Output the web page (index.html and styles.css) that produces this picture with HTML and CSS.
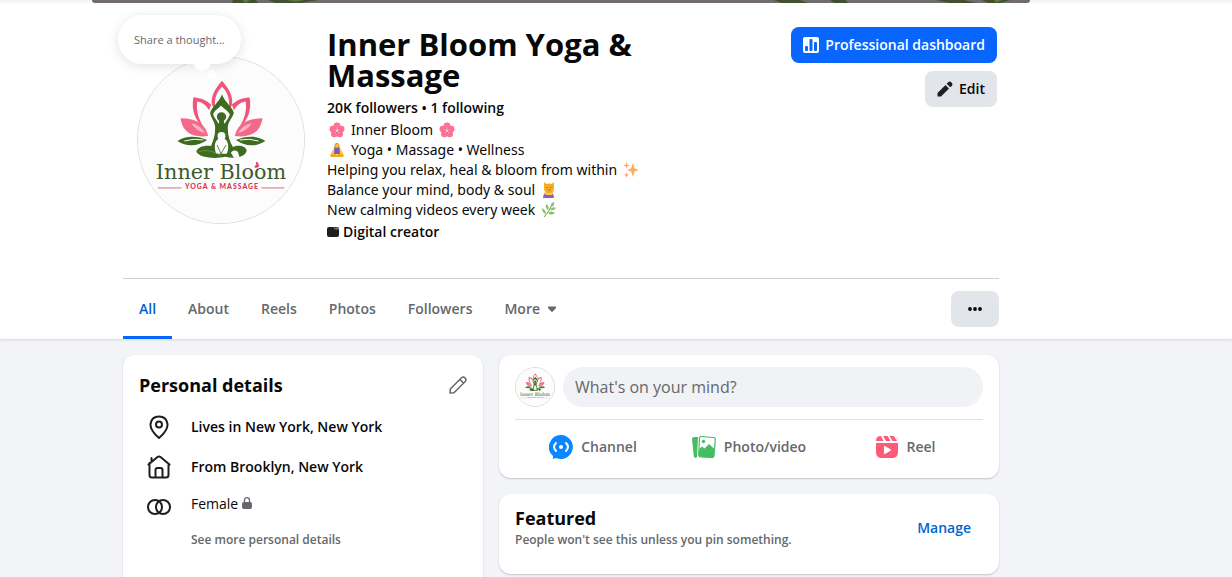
FILE: index.html
```html
<!DOCTYPE html>
<html lang="en">

<head>
    <meta charset="UTF-8" />
    <meta name="viewport" content="width=device-width, initial-scale=1.0" />
    <title>Inner Bloom Yoga &amp; Massage</title>
    <link rel="stylesheet" href="styles.css">
</head>

<body>
    <header class="profile-header">
        <div class="cover">
            <svg class="cover-art" viewBox="0 0 938 3" preserveAspectRatio="none" aria-hidden="true">
                <rect width="938" height="3" fill="#716b6c" />
                <path d="M141 0H164L166 3H140ZM176 0H226L208 3H184ZM682 0H708L716 3H690ZM738 0H754L756 3H742ZM844 0H872L884 3H858ZM890 0H918L908 3H896Z" fill="#42502f" />
                <path d="M150 0H158L154 3ZM194 0H212L204 2ZM692 0L704 3M902 0H910L904 3Z" fill="#5d7543" />
            </svg>
        </div>

        <div class="column">
            <div class="intro">
                <div class="avatar-wrap">
                    <svg class="avatar" viewBox="0 0 168 168" role="img" aria-label="Inner Bloom Yoga &amp; Massage">
                        <g id="logo">
                            <rect width="168" height="168" fill="#fcfcfc" />
                            <path d="M85 24C78 32 73 40 75 49L79 54C76 44 79 36 85 30C91 36 94 44 91 54L95 49C97 40 92 32 85 24Z" fill="#f0567c" />
                            <g id="side">
                                <path d="M56 41C54 53 57 64 67 72C60 61 59 53 60 45C66 46 69 49 72 54L74 48C68 43 62 41 56 41Z" fill="#f0567c" />
                                <path d="M43 62C45 75 53 82 71 80C69 69 60 62 43 62Z" fill="#f4698a" />
                                <path d="M54 67Q63 69 68 77Q59 75 54 67Z" fill="#fbb3c2" />
                                <path d="M40 85C49 79 60 80 70 84C60 91 49 91 40 85Z" fill="#3d6b1f" />
                                <path d="M47 85Q57 82 66 84" fill="none" stroke="#fcfcfc" stroke-width="1" />
                            </g>
                            <use href="#side" transform="matrix(-1 0 0 1 169 0)" />
                            <path d="M85 38C82 46 74 51 73 57C74 63 79 66 78 74C78 80 76 85 74 90C67 89 60 91 59 96C63 103 80 103 88 101C98 103 108 102 110 95C109 89 101 89 96 91C93 86 91 80 91 74C90 66 95 63 97 57C96 51 88 46 85 38ZM84 49C86 52 91 54 93 58C92 62 89 65 88 67L81 67C80 64 77 62 76 58C77 54 82 52 84 49Z" fill="#3d6b1f" fill-rule="evenodd" />
                            <circle cx="84.500" cy="60.500" r="4.700" fill="#3d6b1f" />
                            <path d="M82 63H87V69H82Z" fill="#3d6b1f" />
                            <circle cx="84.500" cy="80" r="4" fill="#fcfcfc" />
                            <path d="M81 83C77 86 77 92 79 98H90C92 92 92 86 88 83Z" fill="#fcfcfc" />
                            <path d="M80 89L84 98L89 89" fill="none" stroke="#3d6b1f" stroke-width=".8" />
                            <path d="M94 97Q97 93 101 96L103 102H97Z" fill="#fcfcfc" />
                            <path d="M61 96Q72 92 84 100" fill="none" stroke="#78964f" stroke-width=".8" />
                            <text class="logo-name" x="84" y="123">Inner Bloom</text>
                            <path d="M118 112Q118 108 123 109Q122 113 118 112ZM121 110Q118 108 120 106Q123 107 121 110Z" fill="#ea4770" />
                            <text class="logo-tag" x="85" y="134">YOGA &amp; MASSAGE</text>
                            <path d="M20 132.500H44M125 132.500H148" stroke="#d9707f" stroke-width="1" />
                        </g>
                    </svg>
                    <button class="thought" type="button">Share a thought...</button>
                </div>

                <div class="bio">
                    <h1>Inner Bloom Yoga &amp; Massage</h1>
                    <p class="counts"><a href="#followers">20K followers</a> • <a href="#following">1 following</a></p>
                    <p class="line">
                        <svg class="emoji first" viewBox="0 0 16 16">
                            <g id="blossom">
                                <g fill="#ff7096">
                                    <circle cx="8" cy="4" r="3.400" />
                                    <circle cx="3.800" cy="7" r="3.300" />
                                    <circle cx="12.200" cy="7" r="3.300" />
                                    <circle cx="5.300" cy="12" r="3.300" />
                                    <circle cx="10.700" cy="12" r="3.300" />
                                </g>
                                <circle cx="8" cy="8.500" r="2.400" fill="#e8507b" />
                                <path d="M8 5.500V8.500M5.300 7.600L8 8.500L10.700 7.600M6.300 11L8 8.500L9.700 11" stroke="#ffd9de" stroke-width=".9" fill="none" />
                            </g>
                        </svg>Inner Bloom
                        <svg class="emoji" viewBox="0 0 16 16"><use href="#blossom" /></svg>
                    </p>
                    <p class="line">
                        <svg class="emoji first" viewBox="0 0 16 16">
                            <path d="M8 1C5.500 1 5.500 4 5 7H11C10.500 4 10.500 1 8 1Z" fill="#c88a2c" />
                            <circle cx="8" cy="3.800" r="1.800" fill="#ffc83d" />
                            <path d="M5 6L2 11V13H4L6 9ZM11 6L14 11V13H12L10 9Z" fill="#ffc83d" />
                            <path d="M5.500 6H10.500L11 12H5Z" fill="#7d5bb5" />
                            <path d="M1 13Q4 11 8 12.500Q12 11 15 13Q15 15 12 15H4Q1 15 1 13Z" fill="#f5a91f" />
                        </svg>Yoga • Massage • Wellness
                    </p>
                    <p class="line">Helping you relax, heal &amp; bloom from within
                        <svg class="emoji" viewBox="0 0 16 16">
                            <path d="M10 1L11.500 6.500L16 8L11.500 9.500L10 15L8 9.500L4 8L8 6.500Z" fill="#ffab5c" />
                            <path d="M3.500 0L4.300 2.700L7 3.500L4.300 4.300L3.500 7L2.700 4.300L0 3.500L2.700 2.700ZM3.500 10L4.200 12.300L6 13L4.200 13.700L3.500 16L2.800 13.700L1 13L2.800 12.300Z" fill="#f8a468" />
                        </svg>
                    </p>
                    <p class="line">Balance your mind, body &amp; soul
                        <svg class="emoji" viewBox="0 0 16 16">
                            <path d="M2 16Q2 10 8 10Q13 10 13 16Z" fill="#8662c7" />
                            <path d="M3 0L5.500 2L8 1.500L10.500 2L13 0L13 6Q13 10 10 11H6Q3 10 3 6Z" fill="#f6ad26" />
                            <path d="M3 10L6 11H10L13 9L11 13H5Z" fill="#ffc83d" />
                            <path d="M5.500 5.500H7M9 5.500H10.500M6.500 8H9.500" stroke="#b46a18" stroke-width=".8" />
                        </svg>
                    </p>
                    <p class="line">New calming videos every week
                        <svg class="emoji" viewBox="0 0 16 16">
                            <path d="M3 15Q7 11 11 3" stroke="#6f9c3d" stroke-width="1" fill="none" />
                            <path d="M10 5Q9 1 13 0Q14 4 10 5ZM9 8Q11 4 15 6Q13 9 9 8ZM7 11Q10 8 14 11Q10 14 7 11ZM7 8Q4 6 5 2Q9 4 7 8ZM5 12Q1 11 1 6Q5 8 5 12Z" fill="#86c267" />
                        </svg>
                    </p>
                    <p class="creator">
                        <svg class="creator-icon" viewBox="0 0 12 10" aria-hidden="true">
                            <rect width="12" height="10" rx="2" fill="#1c1e21" />
                            <path d="M7 0L8 2H12M10 0V2" stroke="#b8babd" stroke-width=".7" fill="none" />
                        </svg>Digital creator
                    </p>
                </div>

                <div class="actions">
                    <button class="btn btn-primary" type="button">
                        <svg class="icon-16" viewBox="0 0 16 16" aria-hidden="true">
                            <rect width="16" height="16" rx="2" fill="#fff" />
                            <rect x="2" y="9" width="3" height="5" rx="1" fill="#0866ff" />
                            <rect x="6.500" y="2" width="3" height="12" rx="1" fill="#0866ff" />
                            <rect x="11" y="5" width="3" height="9" rx="1" fill="#0866ff" />
                        </svg>Professional dashboard
                    </button>
                    <button class="btn" type="button">
                        <svg class="icon-16" viewBox="0 0 16 16" aria-hidden="true">
                            <path d="M.500 12L8.500 4L12 7.500L4 15.500H.500ZM9.700 2.800L11.500 1Q13 0 14.200 1.300L15 2Q16 3.500 15 4.700L13.200 6.300Z" fill="#1c1e21" />
                        </svg>Edit
                    </button>
                </div>
            </div>

            <nav class="tabs">
                <a class="tab active" href="#all">All</a>
                <a class="tab" href="#about">About</a>
                <a class="tab" href="#reels">Reels</a>
                <a class="tab" href="#photos">Photos</a>
                <a class="tab" href="#followers">Followers</a>
                <button class="tab" type="button">More
                    <svg class="caret" viewBox="0 0 8 6" aria-hidden="true"><path d="M0 .500H8V2L4.800 5.500Q4 6 3.200 5.500L0 2Z" fill="currentColor" /></svg>
                </button>
                <button class="btn btn-dots" type="button" aria-label="More options">
                    <svg class="dots" viewBox="0 0 14 4" aria-hidden="true" fill="#080809">
                        <circle cx="2" cy="2" r="1.900" /><circle cx="7" cy="2" r="1.900" /><circle cx="12" cy="2" r="1.900" />
                    </svg>
                </button>
            </nav>
        </div>
    </header>

    <main class="main">
        <div class="column content">
            <section class="card details">
                <div class="details-head">
                    <h2>Personal details</h2>
                    <button class="plain" type="button" aria-label="Edit details">
                        <svg class="pencil" viewBox="0 0 18 18" aria-hidden="true" fill="none" stroke="#65686c" stroke-width="1.500" stroke-linejoin="round">
                            <path d="M1.300 13L12.500 1.800Q14.300.200 16 1.900Q17.800 3.700 16.200 5.500L5 16.700L1 17ZM11 3.500L14.500 7" />
                        </svg>
                    </button>
                </div>
                <ul class="facts">
                    <li>
                        <svg class="icon-24" viewBox="0 0 24 24" fill="none" stroke="#1c1e21" stroke-width="2" stroke-linejoin="round">
                            <path d="M12 23Q3 15 3.500 9Q4.500 1.500 12 1.500T20.500 9Q21 15 12 23Z" /><circle cx="12" cy="9.500" r="3" />
                        </svg>
                        <span>Lives in New York, New York</span>
                    </li>
                    <li>
                        <svg class="icon-24" viewBox="0 0 24 24" fill="none" stroke="#1c1e21" stroke-width="2" stroke-linecap="round" stroke-linejoin="round">
                            <path d="M1.500 9.500L10.500 2Q12 1 13.500 2L22.500 9.500M2.500 8V20Q2.500 22.500 5 22.500H19Q21.500 22.500 21.500 20V8.500M4.500 7V3M8.500 22V15Q8.500 13 10.500 13H13.500Q15.500 13 15.500 15V22" />
                        </svg>
                        <span>From Brooklyn, New York</span>
                    </li>
                    <li class="regular">
                        <svg class="icon-24" viewBox="0 0 24 24" fill="none" stroke="#1c1e21" stroke-width="2">
                            <circle cx="8" cy="12" r="7" /><circle cx="16" cy="12" r="7" />
                        </svg>
                        <span>Female
                            <svg class="lock" viewBox="0 0 10 12"><path d="M2.500 6V3.500Q2.500.700 5 .700T7.500 3.500V6" fill="none" stroke="#65686c" stroke-width="1.300" /><rect y="5" width="10" height="7" rx="2" fill="#65686c" /></svg>
                        </span>
                    </li>
                </ul>
                <a class="see-more" href="#about">See more personal details</a>
            </section>

            <div class="feed">
                <section class="card composer">
                    <div class="composer-top">
                        <svg class="avatar-small" viewBox="0 0 168 168" aria-hidden="true"><use href="#logo" /></svg>
                        <input class="thought-input" type="text" placeholder="What's on your mind?" aria-label="What's on your mind?">
                    </div>
                    <div class="composer-actions">
                        <button type="button">
                            <svg class="icon-24" viewBox="0 0 24 24" aria-hidden="true">
                                <path d="M12 0A12 12 0 1 1 7 23L4 24V21A12 12 0 0 1 12 0Z" fill="#0a86ff" />
                                <circle cx="12" cy="12" r="2" fill="#fff" />
                                <path d="M7 8Q3 12 7 16M17 8Q21 12 17 16" fill="none" stroke="#fff" stroke-width="2" stroke-linecap="round" />
                            </svg>Channel
                        </button>
                        <button type="button">
                            <svg class="icon-24" viewBox="0 0 24 24" aria-hidden="true">
                                <path d="M0 4Q0 2 2 2H6L5 22L3.500 23Q2 23 1.800 21Z" fill="#45bd62" />
                                <path d="M9 1.500L21.500 2.500Q23.500 2.700 23.300 4.500L22 20.500Q21.800 22.700 20 22.500L8.500 21.800Q6.500 21.500 6.700 19.500L7.500 3Q7.700 1.400 9 1.500Z" fill="#fff" stroke="#45bd62" stroke-width="1.200" />
                                <path d="M7.200 14L10 11.500L12.500 13.500L17 9L22.500 14L22 20.500Q21.800 22.500 20 22.500L8.500 21.800Q6.500 21.500 6.700 19.500Z" fill="#45bd62" />
                                <circle cx="11.500" cy="6.500" r="1.700" fill="#45bd62" />
                            </svg>Photo/video
                        </button>
                        <button type="button">
                            <svg class="icon-24" viewBox="0 0 24 24" aria-hidden="true" fill="#ff5a78">
                                <path d="M1 6Q1 1 6 1L8.500 6ZM8 1H12.500L15.500 6H11ZM14.500 1H18Q18.500 1 19 1.200L22 6H17.500ZM21 2Q23 3.500 23 6ZM1 8H23V17Q23 23 17 23H7Q1 23 1 17Z" />
                                <path d="M9 11.500Q9 10.500 10 11L15.500 14.300Q16.500 15 15.500 15.700L10 19Q9 19.500 9 18.500Z" fill="#fff" />
                            </svg>Reel
                        </button>
                    </div>
                </section>

                <section class="card featured">
                    <div>
                        <h2>Featured</h2>
                        <p>People won't see this unless you pin something.</p>
                    </div>
                    <a class="manage" href="#manage">Manage</a>
                </section>
            </div>
        </div>
    </main>
</body>

</html>
```
FILE: styles.css
```css
* {
    box-sizing: border-box;
}

body {
    margin: 0;
    min-height: 100vh;
    display: flex;
    flex-direction: column;
    background: #f2f4f7;
    color: #080809;
    font-family: "Open Sans", "Noto Sans", sans-serif;
    font-size: 14px;
    line-height: 20px;
}

h1, h2, p, ul {
    margin: 0;
    padding: 0;
}

a {
    color: inherit;
    text-decoration: none;
}

button {
    font: inherit;
    color: inherit;
    border: 0;
    background: none;
    padding: 0;
    cursor: pointer;
}

svg {
    flex-shrink: 0;
}

.logo-name {
    font-family: "DejaVu Serif", serif;
    font-size: 21px;
    fill: #3d5a2c;
    text-anchor: middle;
}

.logo-tag {
    font-family: Lato, sans-serif;
    font-size: 7px;
    font-weight: 900;
    letter-spacing: 1px;
    fill: #d8344f;
    text-anchor: middle;
}

/* header */
.profile-header {
    background: linear-gradient(#f1f1f2, #fff 4px);
    padding-right: 110px;
    border-bottom: 1px solid #dfe1e5;
    box-shadow: 0 1px 2px rgba(0, 0, 0, 0.06);
}

.cover {
    max-width: 938px;
    height: 3px;
    margin: 0 auto;
    border-radius: 0 0 8px 8px;
    overflow: hidden;
}

.cover-art {
    display: block;
    width: 100%;
    height: 100%;
}

.column {
    width: 100%;
    max-width: 876px;
    margin: 0 auto;
}

.intro {
    display: flex;
    gap: 22px;
    padding: 24px 2px 36px 14px;
    border-bottom: 1px solid #ced0d4;
}

.avatar-wrap {
    position: relative;
    padding-top: 29px;
}

.avatar {
    display: block;
    width: 168px;
    height: 168px;
    border: 1px solid #dcdddf;
    border-radius: 50%;
}

/* speech bubble over the avatar */
.thought {
    position: absolute;
    top: -12px;
    left: -19px;
    height: 49px;
    padding: 0 16px;
    border-radius: 25px;
    background: #fff;
    box-shadow: 0 2px 12px rgba(0, 0, 0, 0.12);
    color: #65686c;
    font-size: 11px;
    white-space: nowrap;
}

.thought::before,
.thought::after {
    content: "";
    position: absolute;
    background: #fff;
    border-radius: 50%;
}

.thought::before {
    left: 75px;
    top: 38px;
    width: 18px;
    height: 18px;
}

.thought::after {
    left: 90px;
    top: 56px;
    width: 8px;
    height: 8px;
}

.bio {
    flex: 1;
    max-width: 340px;
}

h1 {
    padding-top: 2px;
    margin-bottom: 7px;
    font-size: 31px;
    line-height: 31px;
    font-weight: 700;
}

.counts {
    margin-bottom: 2px;
    font-weight: 600;
}

.line {
    display: flex;
    align-items: center;
    gap: 6px;
    font-family: "Noto Sans", "Open Sans", sans-serif;
    white-space: nowrap;
}

.emoji {
    width: 16px;
    height: 16px;
}

.emoji.first {
    margin-left: 2px;
}

.creator {
    display: flex;
    align-items: center;
    gap: 4px;
    margin-top: 2px;
    font-weight: 600;
}

.creator-icon {
    width: 12px;
    height: 10px;
}

.actions {
    margin-left: auto;
    display: flex;
    flex-direction: column;
    align-items: flex-end;
    gap: 8px;
}

.btn {
    display: flex;
    align-items: center;
    justify-content: center;
    gap: 6px;
    height: 36px;
    padding: 0 12px;
    border-radius: 8px;
    background: #e2e5e9;
    font-weight: 600;
    white-space: nowrap;
}

.btn-primary {
    background: #0866ff;
    color: #fff;
}

.icon-16 {
    width: 16px;
    height: 16px;
}

.icon-24 {
    width: 24px;
    height: 24px;
}

/* tabs */
.tabs {
    display: flex;
    align-items: center;
    height: 60px;
}

.tab {
    position: relative;
    display: flex;
    align-items: center;
    gap: 8px;
    height: 60px;
    padding: 0 16px;
    color: #65686c;
    font-weight: 600;
}

.tab.active {
    color: #0064d1;
}

.tab.active::after {
    content: "";
    position: absolute;
    left: 0;
    right: 0;
    bottom: 0;
    height: 3px;
    background: #0866ff;
}

.caret {
    width: 8px;
    height: 6px;
}

.btn-dots {
    width: 48px;
    margin-left: auto;
}

.dots {
    width: 14px;
    height: 4px;
}

/* cards */
.main {
    flex: 1;
    display: flex;
    padding: 15px 110px 0 0;
}

.content {
    display: grid;
    grid-template-columns: 18fr 25fr;
    gap: 16px;
}

.card {
    background: #fff;
    border-radius: 12px;
    box-shadow: 0 1px 2px rgba(0, 0, 0, 0.2);
}

h2 {
    font-size: 18px;
    line-height: 24px;
    font-weight: 700;
}

.details {
    padding: 18px 16px 0;
    border-radius: 12px 12px 0 0;
}

.details-head {
    display: flex;
    justify-content: space-between;
    align-items: center;
    margin-bottom: 10px;
}

.pencil {
    display: block;
    width: 18px;
    height: 18px;
}

.facts {
    list-style: none;
}

.facts li {
    display: flex;
    align-items: center;
    gap: 20px;
    height: 40px;
    padding-left: 8px;
    font-weight: 600;
}

.facts .regular {
    font-weight: 400;
}

.facts .regular span {
    padding-bottom: 6px;
}

.lock {
    width: 10px;
    height: 12px;
}

.see-more {
    display: block;
    margin-top: 3px;
    padding-left: 52px;
    color: #65686c;
    font-size: 12px;
    font-weight: 600;
}

.feed {
    display: flex;
    flex-direction: column;
    gap: 16px;
    padding-bottom: 3px;
}

.composer {
    padding: 12px 16px 11px;
}

.composer-top {
    display: flex;
    gap: 8px;
    padding-bottom: 12px;
    border-bottom: 1px solid #e0e2e5;
}

.avatar-small {
    width: 40px;
    height: 40px;
    border: 1px solid #dcdddf;
    border-radius: 50%;
}

.thought-input {
    flex: 1;
    min-width: 0;
    height: 40px;
    padding: 0 12px;
    border: 0;
    border-radius: 20px;
    background: #f0f2f5;
    font: inherit;
    font-size: 16px;
}

.thought-input::placeholder {
    color: #65686c;
    opacity: 1;
}

.composer-actions {
    display: grid;
    grid-template-columns: repeat(3, 1fr);
    padding-top: 7px;
}

.composer-actions button {
    display: flex;
    align-items: center;
    justify-content: center;
    gap: 8px;
    height: 40px;
    color: #65686c;
    font-weight: 600;
}

.featured {
    display: flex;
    justify-content: space-between;
    align-items: center;
    min-height: 80px;
    padding: 0 28px 12px 16px;
}

.featured p {
    color: #65686c;
    font-size: 12px;
    font-weight: 600;
}

.manage {
    color: #0064d1;
    font-weight: 600;
}
```
